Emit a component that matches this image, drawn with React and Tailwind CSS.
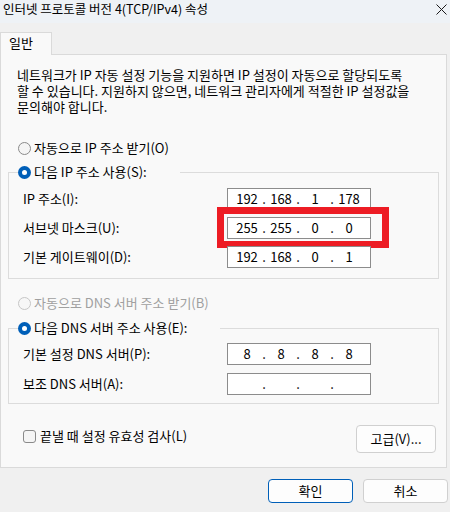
import React from 'react'

const font = "font-['Noto_Sans_CJK_KR',sans-serif]"

function Radio({ checked, disabled }) {
  if (checked) {
    return (
      <span className="w-[13px] h-[13px] rounded-full bg-[#005fb8] flex items-center justify-center shrink-0">
        <span className="w-[5px] h-[5px] rounded-full bg-white" />
      </span>
    )
  }
  return (
    <span
      className={
        disabled
          ? 'w-[13px] h-[13px] rounded-full border border-[#c6c6c6] bg-[#f7f7f7] shrink-0'
          : 'w-[13px] h-[13px] rounded-full border border-[#8a8a8a] bg-[#f5f5f5] shrink-0'
      }
    />
  )
}

function IpBox({ parts }) {
  return (
    <div className="w-[144px] h-[22px] border border-[#8c8c8c] bg-white flex items-center pl-[5px]">
      <span className="w-[28px] text-center">{parts[0]}</span>
      <span className="w-[6px] text-center">.</span>
      <span className="w-[28px] text-center">{parts[1]}</span>
      <span className="w-[6px] text-center">.</span>
      <span className="w-[28px] text-center">{parts[2]}</span>
      <span className="w-[6px] text-center">.</span>
      <span className="w-[28px] text-center">{parts[3]}</span>
    </div>
  )
}

function Row({ label, parts, children }) {
  return (
    <div className="relative flex items-center h-[22px]">
      <span className="w-[218px] pl-[14px]">{label}</span>
      <IpBox parts={parts} />
      {children}
    </div>
  )
}

export default function App() {
  return (
    <div className={`w-[450px] h-[512px] bg-[#f0f0f0] overflow-hidden text-[13px] leading-[16px] text-black ${font}`}>
      {/* title bar */}
      <div className="h-[23px] bg-[#eef2f6] flex items-start justify-between pl-[3px] pt-[1px] text-[12.5px]">
        <span>인터넷 프로토콜 버전 4(TCP/IPv4) 속성</span>
        <svg width="11" height="11" viewBox="0 0 11 11" className="mt-[3px] mr-[3px]">
          <path d="M0.5 0.5 L10.5 10.5 M10.5 0.5 L0.5 10.5" stroke="#1a1a1a" strokeWidth="1" />
        </svg>
      </div>

      {/* tab */}
      <div className="mt-[9px] relative z-10 -mb-px w-[52px] h-[23px] border border-b-0 border-[#dadada] bg-[#f9f9f9] pl-[8px] pt-[2px]">
        일반
      </div>

      {/* panel */}
      <div className="w-[447px] h-[414px] border border-[#dadada] bg-[#f9f9f9] flex flex-col">
        <p className="pt-[12px] pl-[16px] whitespace-nowrap">
          네트워크가 IP 자동 설정 기능을 지원하면 IP 설정이 자동으로 할당되도록
          <br />
          할 수 있습니다. 지원하지 않으면, 네트워크 관리자에게 적절한 IP 설정값을
          <br />
          문의해야 합니다.
        </p>

        <div className="mt-[25px] ml-[17px] flex items-center gap-[3px] h-[16px]">
          <Radio />
          <span>자동으로 IP 주소 받기(O)</span>
        </div>

        <fieldset className="mt-[8px] ml-[7px] w-[431px] border border-[#dcdcdc] pt-[8px] pb-[10px] flex flex-col gap-[7px]">
          <legend className="ml-[9px] w-[162px] h-[16px] flex items-center gap-[3px]">
            <Radio checked />
            <span>다음 IP 주소 사용(S):</span>
          </legend>
          <Row label="IP 주소(I):" parts={['192', '168', '1', '178']} />
          <Row label="서브넷 마스크(U):" parts={['255', '255', '0', '0']}>
            <div className="absolute left-[208px] top-[-10px] w-[172px] h-[41px] border-[7px] border-[#ed1c24]" />
          </Row>
          <Row label="기본 게이트웨이(D):" parts={['192', '168', '0', '1']} />
        </fieldset>

        <div className="mt-[16px] ml-[17px] flex items-center gap-[3px] h-[16px] text-[#a0a0a0]">
          <Radio disabled />
          <span>자동으로 DNS 서버 주소 받기(B)</span>
        </div>

        <fieldset className="mt-[9px] ml-[7px] w-[431px] border border-[#dcdcdc] pt-[7px] pb-[8px] flex flex-col gap-[8px]">
          <legend className="ml-[9px] w-[202px] h-[16px] flex items-center gap-[3px]">
            <Radio checked />
            <span>다음 DNS 서버 주소 사용(E):</span>
          </legend>
          <Row label="기본 설정 DNS 서버(P):" parts={['8', '8', '8', '8']} />
          <Row label="보조 DNS 서버(A):" parts={['', '', '', '']} />
        </fieldset>

        <div className="mt-[21px] flex items-start justify-between">
          <div className="ml-[22px] mt-[3px] flex items-center gap-[4px] h-[16px]">
            <span className="w-[13px] h-[13px] rounded-[3px] border border-[#8a8a8a] bg-[#f5f5f5]" />
            <span>끝낼 때 설정 유효성 검사(L)</span>
          </div>
          <button className="mr-[10px] w-[80px] h-[28px] rounded-[4px] border border-[#d0d0d0] bg-[#fdfdfd] flex items-center justify-center">
            고급(V)...
          </button>
        </div>
      </div>

      {/* footer */}
      <div className="mt-[11px] pr-[2px] flex justify-end gap-[10px]">
        <button className="w-[85px] h-[24px] rounded-[4px] border border-[#005fb8] bg-[#fdfdfd] flex items-center justify-center">
          확인
        </button>
        <button className="w-[85px] h-[24px] rounded-[4px] border border-[#d0d0d0] bg-[#fdfdfd] flex items-center justify-center">
          취소
        </button>
      </div>
    </div>
  )
}
